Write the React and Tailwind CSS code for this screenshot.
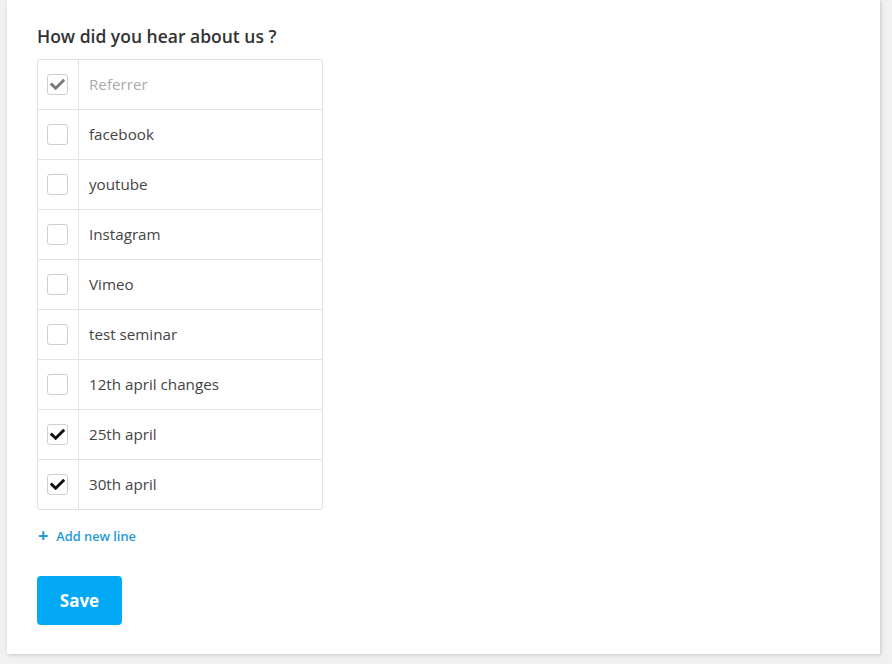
import React, { useState } from "react";
import { FaCheck } from "react-icons/fa";

const initialRows = [
  { label: "Referrer", checked: true, disabled: true },
  { label: "facebook", checked: false },
  { label: "youtube", checked: false },
  { label: "Instagram", checked: false },
  { label: "Vimeo", checked: false },
  { label: "test seminar", checked: false },
  { label: "12th april changes", checked: false },
  { label: "25th april", checked: true },
  { label: "30th april", checked: true },
];

const App = () => {
  const [rows, setRows] = useState(initialRows);

  const toggle = (i) => {
    setRows((prev) => prev.map((r, idx) => (idx === i && !r.disabled ? { ...r, checked: !r.checked } : r)));
  };

  return (
    <div className="min-h-screen bg-[#f1f1f1] pl-[7px] pr-[12px] pb-[10px]" style={{ fontFamily: "'Open Sans', sans-serif" }}>
      <div className="bg-white shadow-[1px_1px_4px_rgba(0,0,0,0.18)] h-[654px] pl-[30px] pt-[24px]">
        <h2 className="text-[17.5px] font-semibold text-[#333] leading-[24px] mb-[11px]">How did you hear about us ?</h2>

        {/* options table */}
        <div className="w-[286px] border border-[#e0e0e0] rounded-[3px]">
          {rows.map((row, i) => (
            <div key={row.label} className={`flex ${i > 0 ? "h-[50px] border-t border-[#e3e3e3]" : "h-[49px]"}`}>
              <div className="w-[41px] border-r border-[#e3e3e3] flex items-center pl-[9px]">
                <button
                  type="button"
                  onClick={() => toggle(i)}
                  className="w-[21px] h-[21px] border border-[#cfcfcf] rounded-[3px] flex items-center justify-center bg-white"
                >
                  {row.checked && <FaCheck size={15} color={row.disabled ? "#7a7a7a" : "#111"} />}
                </button>
              </div>
              <div className={`flex items-center pl-[10px] text-[15.2px] ${row.disabled ? "text-[#aaa]" : "text-[#444]"}`}>
                {row.label}
              </div>
            </div>
          ))}
        </div>

        <button type="button" className="flex items-center mt-[17px] ml-[1px] text-[#1c9ad6] text-[12.8px] font-semibold">
          <span className="text-[18px] font-bold leading-none mr-[8px] -mt-[3px]">+</span>
          Add new line
        </button>

        <button type="button" className="mt-[30px] w-[85px] h-[49px] bg-[#03a9f4] rounded-[4px] text-white text-[17px] font-bold">
          Save
        </button>
      </div>
    </div>
  );
};

export default App;
